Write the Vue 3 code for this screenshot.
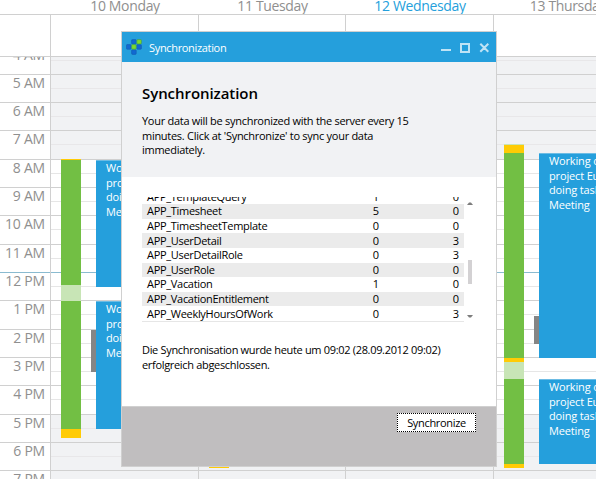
<script setup>
const hourLines = [74, 102, 130, 159, 187, 215, 244, 272, 300, 329, 357, 385, 414, 442, 470, 499]
const names = ['4 AM', '5 AM', '6 AM', '7 AM', '8 AM', '9 AM', '10 AM', '11 AM', '12 PM', '1 PM', '2 PM', '3 PM', '4 PM', '5 PM', '6 PM', '7 PM']
const hours = names.map((label, i) => {
  const top = i ? hourLines[i - 1] : 46
  const h = hourLines[i] - top
  return { label, h, off: i < 4 || i > 12, now: i === 8 }
})

const days = [
  {
    label: '10 Monday',
    blocks: [
      { k: 'yellow', y: 159, h: 1 }, { k: 'green', y: 160, h: 125 }, { k: 'pale', y: 285, h: 16 },
      { k: 'green', y: 301, h: 128 }, { k: 'yellow', y: 429, h: 9 },
      { k: 'busy', y: 330, h: 42 },
      { k: 'event', y: 160, h: 127 }, { k: 'event', y: 301, h: 128 }
    ]
  },
  { label: '11 Tuesday', blocks: [{ k: 'yellow', y: 459, h: 9 }] },
  { label: '12 Wednesday', today: true, blocks: [] },
  {
    label: '13 Thursday',
    blocks: [
      { k: 'pale', y: 144, h: 1 }, { k: 'yellow', y: 145, h: 8 }, { k: 'green', y: 153, h: 205 },
      { k: 'yellow', y: 358, h: 4 }, { k: 'pale', y: 362, h: 17 }, { k: 'green', y: 379, h: 85 },
      { k: 'yellow', y: 464, h: 4 }, { k: 'busy', y: 316, h: 28 },
      { k: 'event', y: 153, h: 205 }, { k: 'event', y: 379, h: 85 }
    ]
  }
]

const eventLines = ['Working on', 'project Euro', 'doing tasks', 'Meeting']

const rows = [
  ['APP_TemplateQuery', 1, 0],
  ['APP_Timesheet', 5, 0],
  ['APP_TimesheetTemplate', 0, 0],
  ['APP_UserDetail', 0, 3],
  ['APP_UserDetailRole', 0, 3],
  ['APP_UserRole', 0, 0],
  ['APP_Vacation', 1, 0],
  ['APP_VacationEntitlement', 0, 0],
  ['APP_WeeklyHoursOfWork', 0, 3]
]
</script>

<template>
  <div class="screen">
    <div class="calendar">
      <header class="days">
        <span></span>
        <span v-for="d in days" :key="d.label" class="day-name" :class="{ today: d.today }">{{ d.label }}</span>
      </header>
      <div class="allday">
        <span></span>
        <span v-for="d in days" :key="d.label" class="cell"></span>
      </div>
      <div class="body">
        <div class="scroll">
          <div class="times">
            <div v-for="(h, i) in hours" :key="i" class="time" :class="{ now: h.now }" :style="{ height: h.h + 'px' }">{{ h.label }}</div>
          </div>
          <div v-for="d in days" :key="d.label" class="column">
            <div v-for="(h, i) in hours" :key="i" class="slot" :class="{ off: h.off, now: h.now }" :style="{ height: h.h + 'px' }"><i></i></div>
            <div v-for="(b, i) in d.blocks" :key="'b' + i" class="block" :class="b.k" :style="{ top: b.y - 46 + 'px', height: b.h + 'px' }">
              <template v-if="b.k === 'event'"><div v-for="l in eventLines" :key="l">{{ l }}</div></template>
            </div>
          </div>
        </div>
      </div>
    </div>

    <section class="dialog">
      <div class="titlebar">
        <svg class="logo" width="16" height="16" viewBox="0 0 16 16">
          <g stroke-width=".7">
            <g fill="#1169d2" stroke="#1563b4">
              <rect x="5.6" y=".6" width="4.6" height="4.4" rx=".8" />
              <rect x=".4" y="5.6" width="4.6" height="4.6" rx=".8" />
              <rect x="10.8" y="5.6" width="4.6" height="4.6" rx=".8" />
              <rect x="5.6" y="10.8" width="4.6" height="4.6" rx=".8" />
            </g>
            <g fill="#7ddb2c" stroke="#3f9a5a">
              <rect x="10.8" y=".6" width="4.6" height="4.4" rx=".8" />
              <rect x="5.6" y="5.6" width="4.6" height="4.6" rx=".8" />
            </g>
          </g>
        </svg>
        <span class="title">Synchronization</span>
        <svg class="controls" width="48" height="10" viewBox="0 0 48 10" fill="none" stroke="#bfe3f5" stroke-width="2">
          <path d="M0 7H10M20 1H28V9H20ZM20 0V2M39.3 .8L47.3 8.8M47.3 .8L39.3 8.8" />
        </svg>
      </div>
      <div class="intro">
        <h1>Synchronization</h1>
        <p>Your data will be synchronized with the server every 15</p>
        <p>minutes. Click at 'Synchronize' to sync your data</p>
        <p>immediately.</p>
      </div>
      <div class="content">
        <div class="list">
          <div class="viewport">
            <div class="rows">
              <div v-for="(r, i) in rows" :key="r[0]" class="row" :class="{ odd: i % 2 }">
                <span class="name">{{ r[0] }}</span><span class="n1">{{ r[1] }}</span><span class="n2">{{ r[2] }}</span>
              </div>
            </div>
          </div>
          <div class="scrollbar">
            <svg width="6" height="3" viewBox="0 0 6 3"><path d="M0 3L2 .5H4L6 3Z" fill="#7d7d7d" /></svg>
            <span class="thumb"></span>
            <svg width="6" height="3" viewBox="0 0 6 3"><path d="M0 0L2 2.5H4L6 0Z" fill="#7d7d7d" /></svg>
          </div>
        </div>
        <p class="status">Die Synchronisation wurde heute um 09:02 (28.09.2012 09:02)</p>
        <p class="status">erfolgreich abgeschlossen.</p>
      </div>
      <footer><button>Synchronize</button></footer>
    </section>
  </div>
</template>

<style>
body { margin: 0; overflow: hidden; }
</style>

<style scoped>
* { box-sizing: border-box; }
.screen { position: relative; width: 596px; height: 479px; overflow: hidden; background: #fff; font: 11px/14.63px "Open Sans", "Noto Sans", sans-serif; color: #000; }
.calendar { display: flex; flex-direction: column; width: 641px; height: 479px; }
.days, .allday { display: grid; grid-template-columns: 50px 148px 147px 148px 148px; }
.days { height: 14px; font-size: 14px; line-height: 11px; letter-spacing: -.35px; color: #8f8f8f; }
.day-name { padding-left: 2px; text-align: center; white-space: nowrap; }
.day-name.today { color: #259fdc; }
.allday { height: 43px; border-top: 1px solid #d0d0d0; border-bottom: 1px solid #d0d0d0; }
.cell { border-left: 1px solid #d0d0d0; }
.body { flex: 1; overflow: hidden; }
.scroll { display: grid; grid-template-columns: 50px 148px 147px 148px 148px; margin-top: -11px; }
.time { border-top: 1px solid #d0d0d0; padding: 0 5px 0 0; text-align: right; font-size: 14px; line-height: 15px; letter-spacing: -.2px; color: #8f8f8f; }
.column { position: relative; border-left: 1px solid #d0d0d0; }
.slot { border-top: 1px solid #d0d0d0; padding-top: 13px; background: #fff; }
.slot i { display: block; height: 1px; background: #e6e6e6; }
.slot.off { background: #f1f2f4; }
.slot.off i { background: #e8e7e9; }
.now { border-top-color: #8abbd0; }
.block { position: absolute; left: 10px; width: 20px; overflow: hidden; }
.green { background: #72bf44; }
.yellow { background: #ffcb05; }
.pale { background: #c8e5b6; }
.busy { left: 40px; width: 5px; background: #858585; }
.event { left: 45px; width: 95px; padding: 0 0 0 10px; background: #259fdc; color: #fff; white-space: nowrap; letter-spacing: -.15px; border-top: 1px solid #6dbce4; }

.dialog { position: absolute; left: 121px; top: 31px; width: 376px; height: 436px; display: flex; flex-direction: column; border: 1px solid #d0d0d0; background: #fff; }
.titlebar { display: flex; align-items: center; height: 30px; padding: 0 7px 0 4px; background: #259fdc; color: #fff; }
.title { flex: 1; padding-left: 7px; padding-top: 2px; letter-spacing: -.33px; }
.controls { margin-top: 2px; }
.intro { height: 115px; padding: 21px 20px 0; background: #f1f2f4; }
h1 { margin: 0 0 11px; font-size: 15px; line-height: 20px; font-weight: 600; letter-spacing: -.06px; }
p { margin: 0; white-space: nowrap; letter-spacing: -.28px; }
.status { letter-spacing: -.32px; }
.content { flex: 1; padding: 20px 20px 0; }
.list { display: flex; height: 125px; margin-bottom: 21px; }
.viewport { width: 322px; height: 125px; overflow: hidden; border-bottom: 1px solid #e6e6e6; }
.rows { margin-top: -7.63px; }
.row { display: flex; height: 14.63px; padding: .35px 5px 0; letter-spacing: -.1px; }
.odd { background: #ebebeb; }
.name { width: 200px; letter-spacing: -.3px; }
.n1 { width: 32px; text-align: right; }
.n2 { width: 80px; text-align: right; }
.scrollbar { display: flex; flex-direction: column; justify-content: space-between; align-items: center; width: 6px; margin-left: 3px; padding: 5px 0 4px; }
.thumb { width: 4px; height: 24px; margin-top: 24px; background: #d3d1d3; }
footer { display: flex; justify-content: flex-end; align-items: flex-start; height: 60px; padding: 6px 20px 0 0; background: #c0bebf; border-top: 1px solid #d0d0d0; }
button { width: 79px; height: 19px; padding: 0; border: 1px dotted #000; background: #fff; color: #000; font: inherit; line-height: 17px; letter-spacing: -.33px; }
</style>
